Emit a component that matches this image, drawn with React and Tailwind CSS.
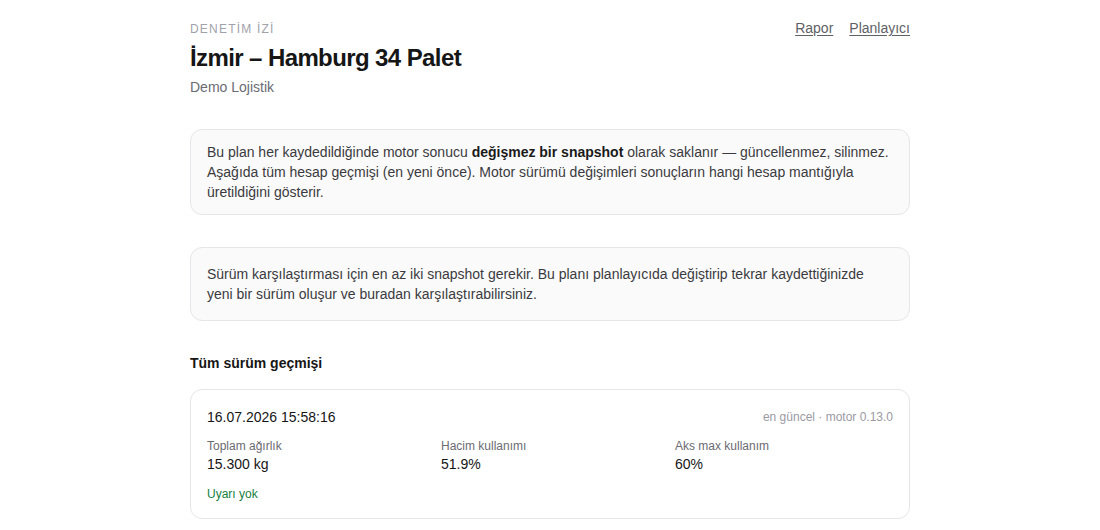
export default function App() {
  return (
    <div className="min-h-screen bg-white text-[#1f1f1f]" style={{ fontFamily: '"Liberation Sans", Arial, sans-serif' }}>
      <div className="mx-auto w-[720px] pt-5">
        <div className="flex items-start justify-between">
          <div>
            <div className="mt-px text-xs leading-4 tracking-[0.1em] text-[#a1a1aa]">DENETİM İZİ</div>
            <h1 className="mt-[5px] text-2xl leading-8 font-bold tracking-tight text-[#161616]">İzmir – Hamburg 34 Palet</h1>
            <div className="mt-[3px] text-sm leading-5 text-[#6b6b72]">Demo Lojistik</div>
          </div>
          <div className="flex gap-4 text-sm leading-4 text-[#5f5f66]">
            <a href="#" className="underline underline-offset-2">Rapor</a>
            <a href="#" className="underline underline-offset-2">Planlayıcı</a>
          </div>
        </div>

        <div className="mt-8 rounded-xl border border-[#e6e6e8] bg-[#fafafa] px-4 py-3 text-sm leading-5 text-[#3a3a40]">
          Bu plan her kaydedildiğinde motor sonucu <strong className="font-bold text-[#1a1a1a]">değişmez bir snapshot</strong> olarak saklanır — güncellenmez, silinmez. Aşağıda tüm hesap geçmişi (en yeni önce). Motor sürümü değişimleri sonuçların hangi hesap mantığıyla üretildiğini gösterir.
        </div>

        <div className="mt-8 rounded-xl border border-[#e6e6e8] bg-[#fafafa] px-4 py-4 text-sm leading-5 text-[#3a3a40]">
          Sürüm karşılaştırması için en az iki snapshot gerekir. Bu planı planlayıcıda değiştirip tekrar kaydettiğinizde yeni bir sürüm oluşur ve buradan karşılaştırabilirsiniz.
        </div>

        <h2 className="mt-8 text-sm leading-5 font-bold text-[#161616]">Tüm sürüm geçmişi</h2>

        <div className="mt-4 rounded-xl border border-[#e6e6e8] bg-white px-4 pt-[17px] pb-4">
          <div className="flex items-center justify-between">
            <div className="text-sm leading-5 text-[#161616]">16.07.2026 15:58:16</div>
            <div className="text-xs leading-4 text-[#9a9aa2]">en güncel · motor 0.13.0</div>
          </div>
          <div className="mt-[11px] grid grid-cols-3 gap-4">
            <div>
              <div className="text-xs leading-4 text-[#6b6b72]">Toplam ağırlık</div>
              <div className="text-sm leading-5 text-[#161616]">15.300 kg</div>
            </div>
            <div>
              <div className="text-xs leading-4 text-[#6b6b72]">Hacim kullanımı</div>
              <div className="text-sm leading-5 text-[#161616]">51.9%</div>
            </div>
            <div>
              <div className="text-xs leading-4 text-[#6b6b72]">Aks max kullanım</div>
              <div className="text-sm leading-5 text-[#161616]">60%</div>
            </div>
          </div>
          <div className="mt-3 text-xs leading-4 text-[#15803d]">Uyarı yok</div>
        </div>
      </div>
    </div>
  );
}
